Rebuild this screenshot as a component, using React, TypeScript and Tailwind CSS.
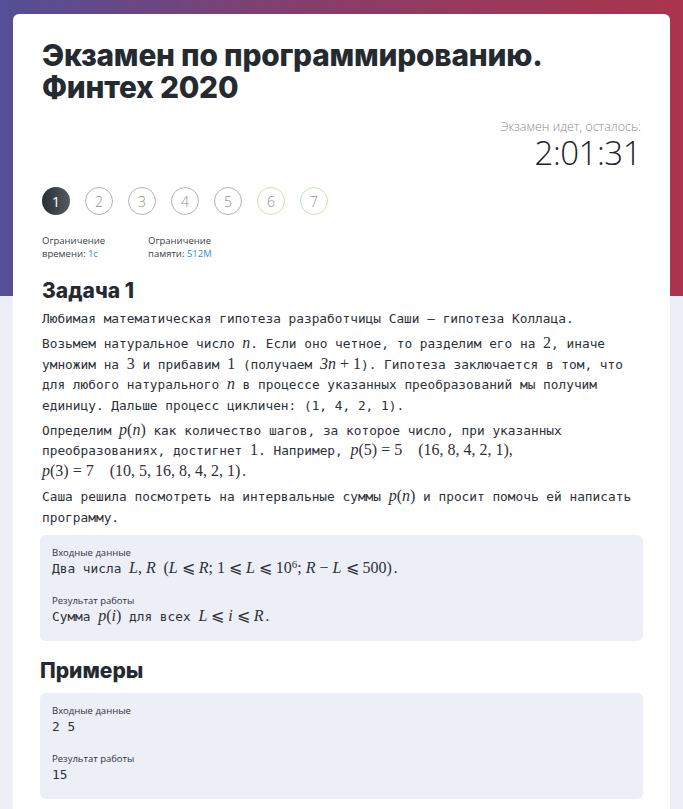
import React from "react";

const I = ({ children }: { children: React.ReactNode }) => (
  <span className="font-['Liberation_Serif',serif] italic text-[16px] leading-none">{children}</span>
);
const R = ({ children }: { children: React.ReactNode }) => (
  <span className="font-['Liberation_Serif',serif] text-[16px] leading-none">{children}</span>
);

function Step({ n, state }: { n: number; state: "active" | "idle" | "ok" }) {
  if (state === "active")
    return (
      <div className="w-[28px] h-[28px] rounded-full bg-gradient-to-r from-[#2a2f36] to-[#565b61] flex items-center justify-center text-white text-[14px] font-['Open_Sans',sans-serif]">
        {n}
      </div>
    );
  return (
    <div
      className={
        "w-[28px] h-[28px] rounded-full border flex items-center justify-center text-[14px] text-[#8f8f8f] font-['Open_Sans',sans-serif] font-light " +
        (state === "ok" ? "border-[#c8e3ad]" : "border-[#b3b3b3]")
      }
    >
      {n}
    </div>
  );
}

export default function App() {
  return (
    <div className="min-h-[809px] bg-[#eceff6] bg-[linear-gradient(to_right,#534f97,#8b3c66,#ab344c)] bg-no-repeat bg-[length:100%_296px] pt-[14px] px-[13px] text-[#272b33]">
      <div className="w-[657px] bg-white rounded-[6px] px-[27px] pt-[25px] pb-[30px]">
        <h1 className="font-['Inter',sans-serif] font-extrabold text-[29.8px] leading-[32px] tracking-[-0.2px] text-[#252a31] pl-[2px]">
          Экзамен по программированию.
          <br />
          Финтех 2020
        </h1>
        <div className="flex flex-col items-end mt-[16px] pr-[2px] font-['Open_Sans',sans-serif]">
          <div className="text-[12.5px] font-light text-[#8c8c8c] leading-[16px]">Экзамен идет, осталось:</div>
          <div className="text-[33px] font-light leading-[36px] text-[#1f232a] tracking-[-0.5px]">2:01:31</div>
        </div>
        <div className="flex gap-[15px] mt-[16px] pl-[2px]">
          <Step n={1} state="active" />
          <Step n={2} state="idle" />
          <Step n={3} state="idle" />
          <Step n={4} state="idle" />
          <Step n={5} state="idle" />
          <Step n={6} state="ok" />
          <Step n={7} state="ok" />
        </div>
        <div className="flex mt-[20px] pl-[2px] font-['Open_Sans',sans-serif] text-[9.5px] leading-[12.5px] text-[#3a3f47]">
          <div className="w-[106px]">
            Ограничение
            <br />
            времени: <span className="text-[#2b8fd8]">1с</span>
          </div>
          <div>
            Ограничение
            <br />
            памяти: <span className="text-[#2b8fd8]">512M</span>
          </div>
        </div>
        <h2 className="font-['Inter',sans-serif] font-extrabold text-[21px] leading-[26px] mt-[18px] pl-[2px] text-[#252a31]">
          Задача 1
        </h2>
        <div className="font-['DejaVu_Sans_Mono',monospace] text-[12.8px] leading-[20.4px] text-[#2d3138] pl-[2px] mt-[5px] flex flex-col gap-[5px]">
          <p>Любимая математическая гипотеза разработчицы Саши – гипотеза Коллаца.</p>
          <p>
            Возьмем натуральное число <I>n</I>. Если оно четное, то разделим его на <R>2</R>, иначе умножим на <R>3</R> и
            прибавим <R>1</R> (получаем <R><i>3n</i> + 1</R>). Гипотеза заключается в том, что для любого натурального <I>n</I> в
            процессе указанных преобразований мы получим единицу. Дальше процесс цикличен: (1, 4, 2, 1).
          </p>
          <p>
            Определим <I>p</I><R>(</R><I>n</I><R>)</R> как количество шагов, за которое число, при указанных преобразованиях,
            достигнет <R>1</R>. Например, <I>p</I><R>(5) = 5&nbsp;&nbsp;&nbsp;&nbsp;(16, 8, 4, 2, 1),</R>
            <br />
            <I>p</I><R>(3) = 7&nbsp;&nbsp;&nbsp;&nbsp;(10, 5, 16, 8, 4, 2, 1)</R>.
          </p>
          <p>
            Саша решила посмотреть на интервальные суммы <I>p</I><R>(</R><I>n</I><R>)</R> и просит помочь ей написать
            программу.
          </p>
        </div>
        <div className="mt-[7px] bg-[#eceff6] rounded-[6px] px-[12px] pt-[12px] pb-[14px]">
          <div className="font-['Open_Sans',sans-serif] text-[9.5px] leading-[12px] text-[#30343b]">Входные данные</div>
          <div className="font-['DejaVu_Sans_Mono',monospace] text-[12.8px] leading-[20px] text-[#2d3138]">
            Два числа <I>L</I><R>, </R><I>R</I> <R>(</R><I>L</I><R> ⩽ </R><I>R</I><R>; 1 ⩽ </R><I>L</I><R> ⩽ 10</R>
            <sup className="font-['Liberation_Serif',serif] text-[11px]">6</sup><R>; </R><I>R</I><R> − </R><I>L</I>
            <R> ⩽ 500)</R>.
          </div>
          <div className="font-['Open_Sans',sans-serif] text-[9.5px] leading-[12px] text-[#30343b] mt-[16px]">Результат работы</div>
          <div className="font-['DejaVu_Sans_Mono',monospace] text-[12.8px] leading-[20px] text-[#2d3138]">
            Сумма <I>p</I><R>(</R><I>i</I><R>)</R> для всех <I>L</I><R> ⩽ </R><I>i</I><R> ⩽ </R><I>R</I>.
          </div>
        </div>
        <h2 className="font-['Inter',sans-serif] font-extrabold text-[21px] leading-[26px] mt-[17px] text-[#252a31]">
          Примеры
        </h2>
        <div className="mt-[9px] bg-[#eceff6] rounded-[6px] px-[12px] pt-[12px] pb-[14px]">
          <div className="font-['Open_Sans',sans-serif] text-[9.5px] leading-[12px] text-[#30343b]">Входные данные</div>
          <div className="font-['DejaVu_Sans_Mono',monospace] text-[12.8px] leading-[20px] text-[#2d3138]">2 5</div>
          <div className="font-['Open_Sans',sans-serif] text-[9.5px] leading-[12px] text-[#30343b] mt-[16px]">Результат работы</div>
          <div className="font-['DejaVu_Sans_Mono',monospace] text-[12.8px] leading-[20px] text-[#2d3138]">15</div>
        </div>
      </div>
    </div>
  );
}
